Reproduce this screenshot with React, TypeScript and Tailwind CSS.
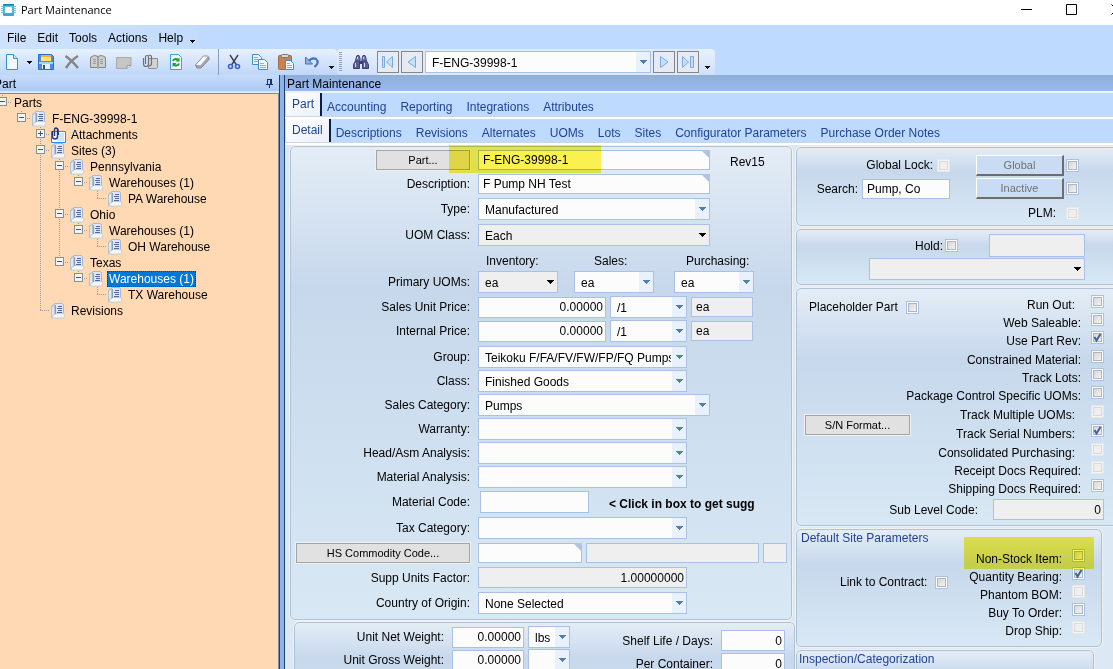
import type { ReactNode } from "react";

const menus = ["File", "Edit", "Tools", "Actions", "Help"];
const mainTabs = ["Part", "Accounting", "Reporting", "Integrations", "Attributes"];
const subTabs = [
  "Detail",
  "Descriptions",
  "Revisions",
  "Alternates",
  "UOMs",
  "Lots",
  "Sites",
  "Configurator Parameters",
  "Purchase Order Notes",
];

type Guide = "blank" | "line";
type TreeNode = {
  label: string;
  guides: Guide[];
  box?: "plus" | "minus";
  last?: boolean;
  icon?: "folder" | "clip";
  selected?: boolean;
};

// guides are the cells left of the node's own cell
const tree: TreeNode[] = [
  { label: "Parts", guides: [], box: "minus", last: true },
  { label: "F-ENG-39998-1", guides: ["blank"], box: "minus", last: true, icon: "folder" },
  { label: "Attachments", guides: ["blank", "blank"], box: "plus", icon: "clip" },
  { label: "Sites (3)", guides: ["blank", "blank"], box: "minus", icon: "folder" },
  { label: "Pennsylvania", guides: ["blank", "blank", "line"], box: "minus", icon: "folder" },
  { label: "Warehouses (1)", guides: ["blank", "blank", "line", "line"], box: "minus", last: true, icon: "folder" },
  { label: "PA Warehouse", guides: ["blank", "blank", "line", "line", "blank"], last: true, icon: "folder" },
  { label: "Ohio", guides: ["blank", "blank", "line"], box: "minus", icon: "folder" },
  { label: "Warehouses (1)", guides: ["blank", "blank", "line", "line"], box: "minus", last: true, icon: "folder" },
  { label: "OH Warehouse", guides: ["blank", "blank", "line", "line", "blank"], last: true, icon: "folder" },
  { label: "Texas", guides: ["blank", "blank", "line"], box: "minus", last: true, icon: "folder" },
  {
    label: "Warehouses (1)",
    guides: ["blank", "blank", "line", "blank"],
    box: "minus",
    last: true,
    icon: "folder",
    selected: true,
  },
  { label: "TX Warehouse", guides: ["blank", "blank", "line", "blank", "blank"], last: true, icon: "folder" },
  { label: "Revisions", guides: ["blank", "blank"], last: true, icon: "folder" },
];

type Flag = { id: string; label: string; checked?: boolean; disabled?: boolean; inset?: boolean };

const partFlags: Flag[][] = [
  [
    { id: "runOut", label: "Run Out:", inset: true },
    { id: "webSaleable", label: "Web Saleable:" },
    { id: "usePartRev", label: "Use Part Rev:", checked: true },
  ],
  [
    { id: "constrained", label: "Constrained Material:" },
    { id: "trackLots", label: "Track Lots:" },
    { id: "packageControl", label: "Package Control Specific UOMs:" },
  ],
  [{ id: "trackMultiple", label: "Track Multiple UOMs:", disabled: true, inset: true }],
  [{ id: "trackSerial", label: "Track Serial Numbers:", checked: true, inset: true }],
  [
    { id: "consolidated", label: "Consolidated Purchasing:", disabled: true, inset: true },
    { id: "receiptDocs", label: "Receipt Docs Required:", disabled: true },
    { id: "shippingDocs", label: "Shipping Docs Required:" },
  ],
];

const siteFlags: Flag[] = [
  { id: "nonStock", label: "Non-Stock Item:" },
  { id: "qtyBearing", label: "Quantity Bearing:", checked: true },
  { id: "phantomBom", label: "Phantom BOM:", disabled: true },
  { id: "buyToOrder", label: "Buy To Order:" },
  { id: "dropShip", label: "Drop Ship:", disabled: true },
];

function Icon({ children }: { children: ReactNode }) {
  return (
    <svg width="16" height="16" viewBox="0 0 16 16" className="shrink-0" aria-hidden="true">
      {children}
    </svg>
  );
}

function DownArrow({ className }: { className: string }) {
  return (
    <svg width="7" height="4" viewBox="0 0 7 4" shapeRendering="crispEdges" className={className} aria-hidden="true">
      <path d="M0 0h7v1H6v1H5v1H4v1H3V3H2V2H1V1H0z" />
    </svg>
  );
}

function SmallArrow() {
  return (
    <svg width="5" height="3" viewBox="0 0 5 3" shapeRendering="crispEdges" aria-hidden="true">
      <path d="M0 0h5v1H4v1H3v1H2V2H1V1H0z" />
    </svg>
  );
}

function TreeCell({ kind, box, last }: { kind: Guide | "node"; box?: "plus" | "minus"; last?: boolean }) {
  return (
    <svg width="19" height="16" viewBox="0 0 19 16" shapeRendering="crispEdges" className="shrink-0" aria-hidden="true">
      <g stroke="#9a9a9a" strokeDasharray="1 1" fill="none">
        {kind === "line" && <path d="M9.5 0v16" />}
        {kind === "node" && <path d={last ? "M9.5 0v7" : "M9.5 0v16"} />}
        {kind === "node" && <path d="M9 7.5h10" />}
      </g>
      {box && (
        <>
          <rect x="5.5" y="2.5" width="8" height="8" rx="1" fill="#f4f4f2" stroke="#8d8d8d" />
          <path d={box === "plus" ? "M7 6.5h5M9.5 4v5" : "M7 6.5h5"} stroke="#3b4f9e" />
        </>
      )}
    </svg>
  );
}

function FolderIcon() {
  return (
    <Icon>
      <path d="M1 3l4-3v12l-2 3H1z" fill="#b3c2ce" />
      <path d="M2 4l2-1.5V12l-2 2z" fill="#dfe8ee" />
      <path d="M5 1h7l1 1v9H5z" fill="#dde8f0" />
      <path d="M5 .5h7.5l1 1.5v9" fill="none" stroke="#a9bac6" />
      <path d="M3 12q2 0 2.500-1.500H14q1.500 2 0 4.500H2z" fill="#f3f7fa" stroke="#b4c3ce" strokeWidth=".7" />
      <path d="M5.5 2v9" stroke="#8ba0b0" />
      <path d="M8 3.5h4M7 5.500h5M8 7.500h4M7 9.500h5" stroke="#4b68a8" />
    </Icon>
  );
}

function ClipIcon() {
  return (
    <Icon>
      <path d="M1.5 4.5h14v11h-14z" fill="#fff" stroke="#1d8df0" />
      <path d="M9 6h5v8H7z" fill="#cfe6fa" />
      <path d="M2.500 4v5.500a2.500 2.500 0 0 0 5 0V2.500a1.500 1.500 0 0 0-3 0V9" fill="none" stroke="#22357f" strokeWidth="1.400" />
      <path d="M5.500 1.500q3-1 3 2V8" fill="none" stroke="#22357f" />
    </Icon>
  );
}

function ToolButton({ label, children }: { label: string; children: ReactNode }) {
  return (
    <button type="button" aria-label={label} className="flex h-[26px] w-[26px] shrink-0 items-center justify-center">
      {children}
    </button>
  );
}

function NavButton({ label, children }: { label: string; children: ReactNode }) {
  return (
    <button
      type="button"
      aria-label={label}
      className="flex size-[22px] items-center justify-center border border-[#868686] bg-[#e4ebf5]"
    >
      <Icon>
        <g fill="#c4e0fa" stroke="#7fa9dc">
          {children}
        </g>
      </Icon>
    </button>
  );
}

function Check({ id, checked, disabled }: { id: string; checked?: boolean; disabled?: boolean }) {
  return (
    <span className="relative size-[13px] shrink-0">
      <input
        id={id}
        type="checkbox"
        defaultChecked={checked}
        disabled={disabled}
        className="peer block size-[13px] appearance-none border border-[#a9c1e4] bg-linear-to-br from-[#cdd0d6] to-[#fafafa] shadow-[inset_0_0_0_1px_#fff,inset_0_0_0_2px_#b0b4bb] disabled:border-[#e6e6e6] disabled:from-[#ececec] disabled:to-[#f2f2f2] disabled:shadow-[inset_0_0_0_1px_#f4f4f4,inset_0_0_0_2px_#d9dadc]"
      />
      <svg
        viewBox="0 0 13 13"
        className="pointer-events-none absolute inset-0 hidden size-[13px] peer-checked:block"
        aria-hidden="true"
      >
        <path d="M3.500 6l2 3.500L9.500 3" fill="none" stroke="#41639f" strokeWidth="2" />
      </svg>
    </span>
  );
}

function Field({
  id,
  label,
  value = "",
  className = "",
  gray,
  right,
  corner,
}: {
  id: string;
  label?: string;
  value?: string;
  className?: string;
  gray?: boolean;
  right?: boolean;
  corner?: boolean;
}) {
  return (
    <div className={`relative shrink-0 ${className}`}>
      <input
        id={id}
        aria-label={label}
        type="text"
        defaultValue={value}
        readOnly={gray}
        className={`block h-full w-full border border-[#a9c1e4] pl-1 outline-none ${gray ? "bg-[#efefef]" : "bg-[#fcfcfc]"} ${right ? "pr-0.5 text-right" : ""}`}
      />
      {corner && (
        <svg viewBox="0 0 9 9" className="absolute top-0 right-0 size-[9px]" aria-hidden="true">
          <path d="M0 0h9v9z" fill="#b0c5e0" />
        </svg>
      )}
    </div>
  );
}

function Combo({
  id,
  label,
  value = "",
  className = "",
  gray,
}: {
  id: string;
  label?: string;
  value?: string;
  className?: string;
  gray?: boolean;
}) {
  return (
    <div className={`relative h-[22px] shrink-0 ${className}`}>
      <select
        id={id}
        aria-label={label}
        className={`block h-full w-full appearance-none border border-[#a9c1e4] pt-px pr-[15px] pl-1.5 outline-none ${gray ? "bg-[#efefef]" : "bg-[#fcfcfc]"}`}
      >
        <option>{value}</option>
      </select>
      <span
        className={`pointer-events-none absolute inset-y-px right-px flex w-[14px] items-center justify-center ${gray ? "" : "bg-[#e8f1fc]"}`}
      >
        <DownArrow className={gray ? "fill-black" : "fill-[#4f7db8]"} />
      </span>
    </div>
  );
}

function Row({ id, label, children }: { id: string; label: string; children: ReactNode }) {
  return (
    <div className="flex items-center gap-2">
      <label htmlFor={id} className="w-[179px] shrink-0 text-right">
        {label}
      </label>
      {children}
    </div>
  );
}

function FlatButton({ className, children }: { className: string; children: ReactNode }) {
  return (
    <button
      type="button"
      className={`h-5 border border-[#a5a5a5] bg-[#e1e1e1] text-[11px] leading-4 outline outline-[#f0f0f0] ${className}`}
    >
      {children}
    </button>
  );
}

function RaisedButton({ children }: { children: ReactNode }) {
  return (
    <button
      type="button"
      className="h-[21px] w-[88px] border-t border-r-2 border-b-2 border-l border-t-white border-r-[#6d6d6d] border-b-[#6d6d6d] border-l-white bg-[#c9dcf3] text-[11px] leading-4 text-[#6f7276]"
    >
      {children}
    </button>
  );
}

function Group({ className = "", children }: { className?: string; children: ReactNode }) {
  return (
    <section
      className={`rounded-[5px] border border-[#aec2d4] bg-linear-to-b from-[#e4edf6] via-[#c7d8ec] via-30% to-[#d8e8f4] outline outline-[#f1f1f1] ${className}`}
    >
      {children}
    </section>
  );
}

function FlagRow({ flag }: { flag: Flag }) {
  return (
    <div className="flex h-[18px] items-start justify-end gap-2.5">
      <label htmlFor={flag.id} className={`pt-0.5 leading-4 ${flag.inset ? "pr-1.5" : ""}`}>
        {flag.label}
      </label>
      <Check id={flag.id} checked={flag.checked} disabled={flag.disabled} />
    </div>
  );
}

function Tabs({ names }: { names: string[] }) {
  return (
    <div className="border-b-2 border-white">
      <nav role="tablist" className="flex h-6 gap-3.5 border-b border-[#ccd6e4] bg-[#bedaff] pl-px text-[#1f4394]">
        {names.map((name, i) =>
          i === 0 ? (
            <button
              key={name}
              role="tab"
              aria-selected="true"
              className="-mr-[9px] h-full border-r-2 border-[#0a1e46] bg-linear-to-br from-white to-[#eaf1fb] px-1.5 pb-0.5"
            >
              {name}
            </button>
          ) : (
            <button key={name} role="tab" aria-selected="false" className="h-full pt-1">
              {name}
            </button>
          ),
        )}
      </nav>
    </div>
  );
}

function TitleBar() {
  return (
    <header className="flex h-[25px] shrink-0 items-start overflow-hidden bg-white pl-px">
      <div className="flex h-5 items-center gap-[5px] font-['Open_Sans',sans-serif] text-[11px]">
        <svg width="15" height="12" viewBox="0 0 15 12" aria-hidden="true">
          <rect x="2" y="0" width="11" height="12" rx="1" fill="#38a9dc" />
          <path d="M0 2h15v1H0zM0 4h15v1H0zM0 6h15v1H0zM0 8h15v1H0z" fill="#6dbfe2" />
          <path d="M2 0h11v1.500H2z" fill="#1b86bd" />
          <rect x="4" y="3" width="7" height="6" rx="1" fill="#fff" />
        </svg>
        <h1>Part Maintenance</h1>
      </div>
      <div className="-mr-[26px] ml-auto flex">
        {[
          ["Minimize", "M0 5.5h11"],
          ["Maximize", "M.5.5h10v10H.5z"],
          ["Close", "M.5.5l10 10M10.5.5l-10 10"],
        ].map(([name, d]) => (
          <button key={name} type="button" aria-label={name} className="flex h-[19px] w-[45px] items-center justify-center">
            <svg width="11" height="11" viewBox="0 0 11 11" fill="none" stroke="#000" aria-hidden="true">
              <path d={d} />
            </svg>
          </button>
        ))}
      </div>
    </header>
  );
}

function Toolbar() {
  return (
    <div className="-ml-px flex h-[26px] shrink-0 bg-[#bedaff]">
      <div className="flex items-center rounded-r-sm bg-linear-to-b from-[#e8f1ff] to-[#bfd6f8]">
        <ToolButton label="New">
          <Icon>
            <path d="M2.500.5h7l4 4v11h-11z" fill="#f2f9ff" stroke="#2f95dd" />
            <path d="M9.500.5v4h4" fill="#c9e5fb" stroke="#2f95dd" />
          </Icon>
        </ToolButton>
        <button type="button" aria-label="New options" className="flex w-2 justify-center">
          <SmallArrow />
        </button>
        <ToolButton label="Save">
          <Icon>
            <path d="M.5.5h13l2 2v13H.5z" fill="#4a8be6" stroke="#2f6cc8" />
            <path d="M3 1h10v6H3z" fill="#ffe56b" />
            <path d="M3 1h10v2H3z" fill="#f7b02c" />
            <path d="M1 8h14v2H1z" fill="#a9d2fa" />
            <path d="M4 10h8v5H4z" fill="#e9eef5" />
            <path d="M5 11h2v4H5z" fill="#36508a" />
          </Icon>
        </ToolButton>
        <ToolButton label="Delete">
          <Icon>
            <path d="M1.500 2q6 4 12.500 12M14 2Q7 6 2 14" fill="none" stroke="#858585" strokeWidth="2.500" />
          </Icon>
        </ToolButton>
        <ToolButton label="Book">
          <Icon>
            <path d="M.5 3.500h1v-1q4-2 6.500 0 2.500-2 6.500 0v1h1v10H9l-1 1-1-1H.5z" fill="#cfcfcf" stroke="#858585" />
            <path d="M8 2.500v11" stroke="#777" />
            <path d="M3 5.500h3M3 7.500h3M3 9.500h3M10 5.500h3M10 7.500h3M10 9.500h3" stroke="#9a9a9a" />
          </Icon>
        </ToolButton>
        <ToolButton label="Memo">
          <Icon>
            <path d="M.5 3.500h14.500v8l-4 3H.5z" fill="#c6c6c6" stroke="#a9a9a9" />
            <path d="M15 11.500h-4v3" fill="#e4e4e4" stroke="#999" />
          </Icon>
        </ToolButton>
        <ToolButton label="Attachments">
          <Icon>
            <path d="M6.500 4.500h9v9l-1 1h-8z" fill="#d3d3d3" stroke="#909090" />
            <path
              d="M1.500 4v6a2.500 2.500 0 0 0 5 0V3a1.500 1.500 0 0 0-3 0v7M6.500 1.500q3-1 3 2V10q-.5 2-2.500 2"
              fill="none"
              stroke="#6f6f6f"
              strokeWidth="1.200"
            />
          </Icon>
        </ToolButton>
        <ToolButton label="Refresh">
          <Icon>
            <path d="M2.500.5h8l3 3v12h-11z" fill="#f3faff" stroke="#3d9ee0" />
            <path d="M5 7q1-3 5-1.500M11 9.500q-1 3-5 1.500" fill="none" stroke="#1f9b2c" strokeWidth="2" />
            <path d="M11.500 3.500v4h-4zM4.500 13V9h4z" fill="#1f9b2c" />
          </Icon>
        </ToolButton>
        <ToolButton label="Clear">
          <Icon>
            <path d="M1.500 11l8-9h4l1.500 1.500v2L7 14H3z" fill="#a4a6b4" stroke="#83859a" />
            <path d="M2 11l7.500-8.500H14L6.500 11z" fill="#fdfdfd" />
          </Icon>
        </ToolButton>
        <span className="flex w-1.5 justify-center">
          <span className="h-[26px] w-px bg-[#8c9fbc]" />
        </span>
        <ToolButton label="Cut">
          <Icon>
            <path d="M4 1l6.500 10M12 1L5.500 11" stroke="#3c4350" strokeWidth="1.400" />
            <g fill="none" stroke="#3b62c4" strokeWidth="1.600">
              <circle cx="4.500" cy="12.500" r="2" />
              <circle cx="11.500" cy="12.500" r="2" />
            </g>
          </Icon>
        </ToolButton>
        <ToolButton label="Copy">
          <Icon>
            <g fill="#eef7ff" stroke="#3f8edb">
              <path d="M.5.5h6l3 3v7h-9z" />
              <path d="M6.500 5.500h6l3 3v7h-9z" />
            </g>
            <path d="M2 3.500h4M2 5.500h4M2 7.500h4M8 9.500h4M8 11.500h6M8 13.500h6" stroke="#7db3ea" />
          </Icon>
        </ToolButton>
        <ToolButton label="Paste">
          <Icon>
            <rect x=".5" y="1.500" width="13" height="14" rx="1" fill="#c58350" stroke="#a06b42" />
            <rect x="3.500" y=".5" width="7" height="3" rx="1" fill="#d8d8d8" stroke="#777" />
            <path d="M7.500 6.500h5l3 3v6h-8z" fill="#eef7ff" stroke="#3f8edb" />
            <path d="M9 9.500h3M9 11.500h5M9 13.500h5" stroke="#7db3ea" />
          </Icon>
        </ToolButton>
        <ToolButton label="Undo">
          <Icon>
            <path d="M4 8q4-5 8-3 4 3.500-1.500 8" fill="none" stroke="#4472c0" strokeWidth="2.200" />
            <path d="M1.500 3v7h7z" fill="#8fb2e8" stroke="#4472c0" />
          </Icon>
        </ToolButton>
        <span className="flex h-full w-3 items-end justify-center pb-1.5">
          <SmallArrow />
        </span>
      </div>
      <div className="flex items-center rounded-sm bg-linear-to-b from-[#e8f1ff] to-[#cfe0f9]">
        <svg width="3" height="20" viewBox="0 0 3 20" className="mr-1.5 ml-0.5" aria-hidden="true">
          <path d="M1.500 0v20" stroke="#98a2b0" strokeWidth="3" strokeDasharray="1 1" />
        </svg>
        <ToolButton label="Search">
          <Icon>
            <path d="M4 1.500h2l1 3v3H2.500l.5-3zM10 1.500h2l1 3 .5 3H9v-3z" fill="#7378a8" stroke="#3b3f74" />
            <path d="M.5 14.500v-4l2-3.500h4v7.500zM15.500 14.500v-4l-2-3.500h-4v7.500z" fill="#5a5f93" stroke="#3b3f74" />
            <path d="M6.500 7h3v3h-3z" fill="#3b3f74" />
            <path d="M2.500 9v4M11.500 9v4M4.500 3v2M10.500 3v2" stroke="#d4d6ee" />
          </Icon>
        </ToolButton>
        <div className="ml-[3px] flex items-center gap-0.5 bg-[#dfe9f7] py-0.5">
          <NavButton label="First">
            <path d="M2.500 2.500h2v11h-2z" />
            <path d="M12.500 2.500v11l-6-5.500z" />
          </NavButton>
          <NavButton label="Previous">
            <path d="M11.500 2.500v11L4 8z" />
          </NavButton>
          <Combo id="partPicker" label="Part number" value="F-ENG-39998-1" className="w-[226px]" />
          <NavButton label="Next">
            <path d="M4.500 2.500v11L12 8z" />
          </NavButton>
          <NavButton label="Last">
            <path d="M2.500 2.500v11l6-5.500z" />
            <path d="M10.500 2.500h3v11h-3z" />
          </NavButton>
        </div>
        <span className="flex h-full w-4 items-end justify-center pb-1.5">
          <SmallArrow />
        </span>
      </div>
    </div>
  );
}

function TreePanel() {
  return (
    <aside className="flex w-[279px] shrink-0 flex-col overflow-hidden">
      <div className="flex h-4 shrink-0 items-center justify-between bg-linear-to-b from-[#c6dcfb] to-[#abc9f3] pr-1.5">
        <h2 className="-ml-1.5 pt-0.5">Part</h2>
        <svg width="7" height="9" viewBox="0 0 7 9" fill="none" stroke="#1c2f6e" shapeRendering="crispEdges" aria-hidden="true">
          <path d="M1 .5h5M1.500 0v5M5.500 0v5M4.500 0v5M0 5.500h7M3.500 5v4" />
        </svg>
      </div>
      <ul className="mt-0.5 flex-1 border-t border-r border-[#7c8ba3] bg-[#ffd9b4] pt-px">
        {tree.map((node, i) => (
          <li key={i} className="-ml-[7px] flex h-4 items-center leading-4">
            {node.guides.map((g, j) => (
              <TreeCell key={j} kind={g} />
            ))}
            <TreeCell kind="node" box={node.box} last={node.last} />
            {node.icon === "folder" && <FolderIcon />}
            {node.icon === "clip" && <ClipIcon />}
            <span
              className={`px-0.5 whitespace-nowrap ${node.icon ? "ml-[3px]" : ""} ${node.selected ? "bg-[#0078d7] text-white outline-1 -outline-offset-1 outline-dotted outline-[#3a2a12]" : ""}`}
            >
              {node.label}
            </span>
          </li>
        ))}
      </ul>
    </aside>
  );
}

function PartForm() {
  return (
    <Group className="relative flex h-[474px] shrink-0 flex-col pt-[3px]">
      <div className="flex flex-col gap-1">
        <div className="flex items-center gap-2">
          <div className="flex w-[179px] shrink-0 justify-end">
            <FlatButton className="w-[94px]">Part...</FlatButton>
          </div>
          <Field id="part" label="Part" value="F-ENG-39998-1" className="h-5 w-[232px]" corner />
          <span className="ml-3 pt-1">Rev15</span>
        </div>
        <Row id="description" label="Description:">
          <Field id="description" value="F Pump NH Test" className="h-5 w-[232px]" corner />
        </Row>
        <Row id="type" label="Type:">
          <Combo id="type" value="Manufactured" className="w-[232px]" />
        </Row>
        <Row id="uomClass" label="UOM Class:">
          <Combo id="uomClass" value="Each" className="w-[232px]" gray />
        </Row>
      </div>
      <div className="flex h-[25px] items-center pt-1 pl-[195px]">
        <label htmlFor="uomInventory" className="w-[108px]">
          Inventory:
        </label>
        <label htmlFor="uomSales" className="w-[92px]">
          Sales:
        </label>
        <label htmlFor="uomPurchasing">Purchasing:</label>
      </div>
      <Row id="uomInventory" label="Primary UOMs:">
        <Combo id="uomInventory" value="ea" className="w-20" gray />
        <Combo id="uomSales" value="ea" className="ml-2 w-20" />
        <Combo id="uomPurchasing" value="ea" className="ml-3 w-20" />
      </Row>
      <div className="mt-[3px] flex flex-col gap-0.5">
        {["Sales Unit Price:", "Internal Price:"].map((label) => (
          <Row key={label} id={label} label={label}>
            <div className="flex items-center gap-1">
              <Field id={label} value="0.00000" className="h-[21px] w-32" right />
              <Combo id={`${label}per`} label={`${label} per`} value="/1" className="w-[77px]" />
              <Field id={`${label}uom`} label={`${label} UOM`} value="ea" className="h-5 w-[62px]" gray />
            </div>
          </Row>
        ))}
      </div>
      <div className="mt-1 flex flex-col gap-0.5">
        <Row id="group" label="Group:">
          <Combo id="group" value="Teikoku F/FA/FV/FW/FP/FQ Pumps" className="w-[209px]" />
        </Row>
        <Row id="class" label="Class:">
          <Combo id="class" value="Finished Goods" className="w-[209px]" />
        </Row>
        <Row id="salesCategory" label="Sales Category:">
          <Combo id="salesCategory" value="Pumps" className="w-[232px]" />
        </Row>
        <Row id="warranty" label="Warranty:">
          <Combo id="warranty" className="w-[209px]" />
        </Row>
        <Row id="headAnalysis" label="Head/Asm Analysis:">
          <Combo id="headAnalysis" className="w-[209px]" />
        </Row>
        <Row id="materialAnalysis" label="Material Analysis:">
          <Combo id="materialAnalysis" className="w-[209px]" />
        </Row>
      </div>
      <div className="mt-[3px] flex flex-col gap-1">
        <Row id="materialCode" label="Material Code:">
          <Field id="materialCode" className="ml-0.5 h-[22px] w-[109px]" />
          <strong className="ml-3 pt-1 whitespace-nowrap">&lt; Click in box to get sugg</strong>
        </Row>
        <Row id="taxCategory" label="Tax Category:">
          <Combo id="taxCategory" className="w-[209px]" />
        </Row>
        <div className="flex items-center gap-2">
          <div className="flex w-[179px] shrink-0 justify-end">
            <FlatButton className="w-[174px]">HS Commodity Code...</FlatButton>
          </div>
          <div className="flex gap-1">
            <Field id="hsCode" label="HS commodity code" className="h-5 w-[104px]" corner />
            <Field id="hsDescription" label="HS description" className="h-5 w-[173px]" gray />
            <Field id="hsUnit" label="HS unit" className="h-5 w-6" gray />
          </div>
        </div>
        <Row id="suppUnits" label="Supp Units Factor:">
          <Field id="suppUnits" value="1.00000000" className="h-[21px] w-[209px]" gray right />
        </Row>
        <Row id="country" label="Country of Origin:">
          <Combo id="country" value="None Selected" className="w-[209px]" />
        </Row>
      </div>
      {/* marker over the part number */}
      <span className="pointer-events-none absolute -top-1 left-[158px] h-[30px] w-[152px] bg-[#fdf350] mix-blend-multiply" />
    </Group>
  );
}

function WeightForm() {
  return (
    <Group className="-mr-[3px] ml-1 flex h-[120px] shrink-0 pt-[3px]">
      <div className="flex flex-col gap-px">
        {[
          ["Unit Net Weight:", "lbs"],
          ["Unit Gross Weight:", ""],
        ].map(([label, unit]) => (
          <div key={label} className="flex items-center">
            <label htmlFor={label} className="w-[149px] text-right">
              {label}
            </label>
            <Field id={label} value="0.00000" className="ml-2 h-[21px] w-[72px]" right />
            <Combo id={`${label}unit`} label={`${label} unit`} value={unit} className="ml-1 w-[42px]" />
          </div>
        ))}
      </div>
      <div className="flex flex-1 flex-col gap-0.5 pt-1 pr-[9px]">
        {["Shelf Life / Days:", "Per Container:"].map((label) => (
          <div key={label} className="flex items-center justify-end gap-2">
            <label htmlFor={label}>{label}</label>
            <Field id={label} value="0" className="h-[21px] w-16" right />
          </div>
        ))}
      </div>
    </Group>
  );
}

function SideForm() {
  return (
    <div className="flex min-w-0 flex-1 flex-col gap-[3px] overflow-hidden pt-0.5 pl-1">
      <Group className="-mr-2 flex h-[79px] shrink-0 gap-[26px] pt-[7px] pl-[19px]">
        <div className="flex w-[134px] flex-col gap-1">
          <div className="flex h-5 items-center justify-end gap-1">
            <label htmlFor="globalLock">Global Lock:</label>
            <Check id="globalLock" disabled />
          </div>
          <div className="flex items-center justify-end gap-1">
            <label htmlFor="search">Search:</label>
            <Field id="search" value="Pump, Co" className="h-5 w-[88px]" />
          </div>
        </div>
        <div className="flex flex-col gap-0.5">
          <div className="flex items-center gap-0.5">
            <RaisedButton>Global</RaisedButton>
            <Check id="global" />
          </div>
          <div className="flex items-center gap-0.5">
            <RaisedButton>Inactive</RaisedButton>
            <Check id="inactive" />
          </div>
          <div className="flex items-center justify-end gap-2.5 pt-1">
            <label htmlFor="plm">PLM:</label>
            <Check id="plm" disabled />
          </div>
        </div>
      </Group>
      <Group className="-mr-2 flex h-14 shrink-0 flex-col pt-1">
        <div className="flex w-[288px] items-center justify-end">
          <label htmlFor="hold" className="pr-0.5">
            Hold:
          </label>
          <Check id="hold" />
          <Field id="holdDate" label="Hold date" className="ml-[31px] h-[23px] w-24" gray />
        </div>
        <div className="mt-px flex w-[288px] justify-end">
          <Combo id="holdReason" label="Hold reason" className="w-[216px]" gray />
        </div>
      </Group>
      <Group className="-mr-2 flex h-[238px] shrink-0 flex-col pt-1.5">
        <div className="flex w-[307px] justify-between">
          <div className="flex w-24 shrink-0 flex-col items-start gap-[100px] pt-1 pl-2">
            <div className="flex items-center gap-2 pl-1">
              <label htmlFor="placeholder" className="whitespace-nowrap">
                Placeholder Part
              </label>
              <Check id="placeholder" />
            </div>
            <FlatButton className="w-[105px] shrink-0">S/N Format...</FlatButton>
          </div>
          <div className="flex flex-col gap-px whitespace-nowrap">
            {partFlags.map((flags, i) => (
              <div key={i}>
                {flags.map((flag) => (
                  <FlagRow key={flag.id} flag={flag} />
                ))}
              </div>
            ))}
          </div>
        </div>
        <div className="mt-0.5 flex w-[307px] items-center justify-end gap-[15px]">
          <label htmlFor="subLevel">Sub Level Code:</label>
          <Field id="subLevel" value="0" className="h-[21px] w-[111px]" gray right />
        </div>
      </Group>
      <Group className="relative mr-[11px] h-[118px] shrink-0">
        <h3 className="pl-1 leading-4 text-[#1f4394]">Default Site Parameters</h3>
        <div className="flex w-[288px] justify-between">
          <div className="mt-7 ml-[43px] flex h-4 items-center gap-2 whitespace-nowrap">
            <label htmlFor="contract">Link to Contract:</label>
            <Check id="contract" />
          </div>
          <div className="mt-[3px] whitespace-nowrap">
            {siteFlags.map((flag) => (
              <FlagRow key={flag.id} flag={flag} />
            ))}
          </div>
        </div>
        {/* marker over the non-stock flag */}
        <span className="pointer-events-none absolute top-[7px] left-[167px] h-8 w-[130px] bg-[#fdf350] mix-blend-multiply" />
      </Group>
      <Group className="mr-[19px] h-20 shrink-0">
        <h3 className="pl-0.5 leading-4 text-[#1f4394]">Inspection/Categorization</h3>
      </Group>
    </div>
  );
}

export default function App() {
  return (
    <div className="flex h-screen flex-col overflow-hidden bg-[#dde8f5] font-['Liberation_Sans',Arial,sans-serif] text-[12px] leading-4 text-black">
      <TitleBar />
      <div className="flex h-6 shrink-0 bg-[#bedaff]">
        <nav className="flex items-center gap-[11px] bg-linear-to-r from-[#cfe2fd] to-[#c3dcfe] pt-0.5 pr-1 pl-[7px]">
          {menus.map((name) => (
            <button key={name} type="button">
              {name}
            </button>
          ))}
          <span className="-ml-1 flex h-full items-end pb-1.5">
            <SmallArrow />
          </span>
        </nav>
      </div>
      <Toolbar />
      <div className="flex min-h-0 flex-1">
        <TreePanel />
        <div className="w-1.5 shrink-0 border-x border-[#1f3f7d] bg-[#90b3e6]" />
        <main className="flex min-w-0 flex-1 flex-col overflow-hidden">
          <h2 className="h-4 shrink-0 bg-linear-to-b from-[#8fafd8] to-[#99b9ee] pt-px pl-0.5">Part Maintenance</h2>
          <div className="shrink-0 border-t-2 border-[#eef4fc]">
            <Tabs names={mainTabs} />
            <Tabs names={subTabs} />
          </div>
          <div className="flex min-h-0 flex-1 overflow-hidden">
            <div className="flex w-[507px] shrink-0 flex-col gap-0.5 pt-px pl-[5px]">
              <PartForm />
              <WeightForm />
            </div>
            <SideForm />
          </div>
        </main>
      </div>
    </div>
  );
}
